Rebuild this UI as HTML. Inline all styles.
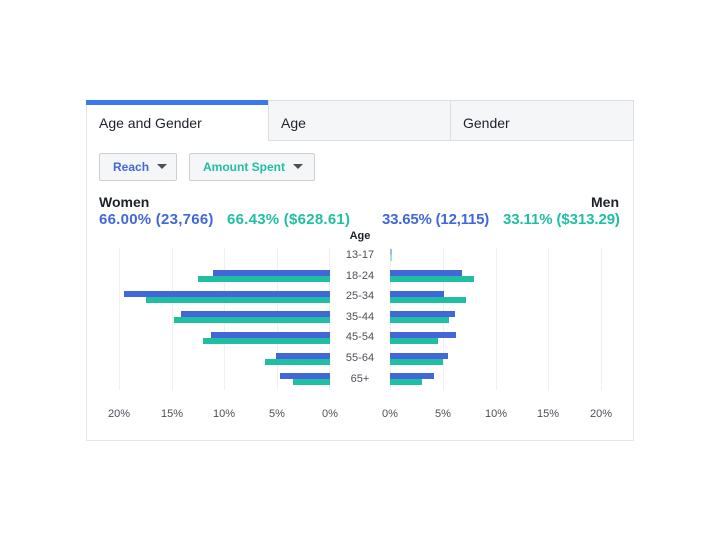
<html><head><style>
body{margin:0;width:720px;height:540px;background:#fff;font-family:"Liberation Sans",Arial,sans-serif;position:relative;overflow:hidden}
div{position:absolute;box-sizing:border-box}
.b{background:#4267d8;height:6px}
.t{background:#20bfa3;height:6px}
.g{width:1px;background:#eef0f2;top:248px;height:142px}
.lab{font-size:11px;color:#4b4f56;width:60px;text-align:center;left:330px}
.ax{font-size:11px;color:#4b4f56;top:408px;width:40px;text-align:center}
.num{top:211px;font-size:15px;font-weight:bold;letter-spacing:0.25px}
.tri{display:inline-block;width:0;height:0;border-left:5px solid transparent;border-right:5px solid transparent;border-top:5px solid #4b4f56;vertical-align:middle;margin-left:8px;position:relative;top:-1px}
</style></head><body>
<div style="left:86px;top:100px;width:548px;height:341px;border:1px solid #e5e7ea"></div>
<div style="left:268px;top:100px;width:366px;height:41px;background:#f5f6f7;border:1px solid #dddfe2"></div>
<div style="left:450px;top:100px;width:1px;height:41px;background:#dddfe2"></div>
<div style="left:86px;top:100px;width:182px;height:5px;background:#3b78f0"></div>
<div style="left:99px;top:115px;font-size:14px;color:#1d2129">Age and Gender</div>
<div style="left:281px;top:115px;font-size:14px;color:#1d2129">Age</div>
<div style="left:463px;top:115px;font-size:14px;color:#1d2129">Gender</div>
<div style="left:99px;top:153px;width:78px;height:28px;background:#f5f6f7;border:1px solid #ccd0d5;border-radius:2px;font-size:12px;font-weight:bold;color:#4267d8;padding:6px 0 0 13px">Reach<span class="tri"></span></div>
<div style="left:189px;top:153px;width:126px;height:28px;background:#f5f6f7;border:1px solid #ccd0d5;border-radius:2px;font-size:12px;font-weight:bold;color:#20bfa3;padding:6px 0 0 13px">Amount Spent<span class="tri"></span></div>
<div style="left:99px;top:194px;font-size:14px;font-weight:bold;color:#1d2129">Women</div>
<div style="left:591px;top:194px;font-size:14px;font-weight:bold;color:#1d2129">Men</div>
<div class="num" style="left:99px;color:#4267d8">66.00% (23,766)</div>
<div class="num" style="left:227px;color:#20bfa3">66.43% ($628.61)</div>
<div class="num" style="left:382px;color:#4267d8;letter-spacing:-0.2px">33.65% (12,115)</div>
<div class="num" style="left:503px;color:#20bfa3;letter-spacing:-0.1px">33.11% ($313.29)</div>
<div style="left:330px;top:230px;width:60px;text-align:center;font-size:11px;font-weight:bold;color:#1d2129">Age</div>
<div class="g" style="left:119px"></div><div class="g" style="left:172px"></div><div class="g" style="left:224px"></div><div class="g" style="left:277px"></div><div class="g" style="left:329px"></div>
<div class="g" style="left:390px"></div><div class="g" style="left:443px"></div><div class="g" style="left:496px"></div><div class="g" style="left:548px"></div><div class="g" style="left:601px"></div>
<div class="lab" style="top:249px">13-17</div>
<div class="lab" style="top:270px">18-24</div>
<div class="lab" style="top:290px">25-34</div>
<div class="lab" style="top:311px">35-44</div>
<div class="lab" style="top:331px">45-54</div>
<div class="lab" style="top:352px">55-64</div>
<div class="lab" style="top:373px">65+</div>
<div class="b" style="top:249px;left:390px;width:2px;background:#a8b8ee"></div><div class="t" style="top:255px;left:390px;width:2px;background:#9fe3d5"></div>
<div class="b" style="top:270px;left:213px;width:117px"></div><div class="t" style="top:276px;left:198px;width:132px"></div>
<div class="b" style="top:270px;left:390px;width:72px"></div><div class="t" style="top:276px;left:390px;width:84px"></div>
<div class="b" style="top:291px;left:124px;width:206px"></div><div class="t" style="top:297px;left:146px;width:184px"></div>
<div class="b" style="top:291px;left:390px;width:54px"></div><div class="t" style="top:297px;left:390px;width:76px"></div>
<div class="b" style="top:311px;left:181px;width:149px"></div><div class="t" style="top:317px;left:174px;width:156px"></div>
<div class="b" style="top:311px;left:390px;width:65px"></div><div class="t" style="top:317px;left:390px;width:59px"></div>
<div class="b" style="top:332px;left:211px;width:119px"></div><div class="t" style="top:338px;left:203px;width:127px"></div>
<div class="b" style="top:332px;left:390px;width:66px"></div><div class="t" style="top:338px;left:390px;width:48px"></div>
<div class="b" style="top:353px;left:276px;width:54px"></div><div class="t" style="top:359px;left:265px;width:65px"></div>
<div class="b" style="top:353px;left:390px;width:58px"></div><div class="t" style="top:359px;left:390px;width:53px"></div>
<div class="b" style="top:373px;left:280px;width:50px"></div><div class="t" style="top:379px;left:293px;width:37px"></div>
<div class="b" style="top:373px;left:390px;width:44px"></div><div class="t" style="top:379px;left:390px;width:32px"></div>
<div class="ax" style="left:99px">20%</div><div class="ax" style="left:152px">15%</div><div class="ax" style="left:204px">10%</div><div class="ax" style="left:257px">5%</div><div class="ax" style="left:310px">0%</div>
<div class="ax" style="left:370px">0%</div><div class="ax" style="left:423px">5%</div><div class="ax" style="left:476px">10%</div><div class="ax" style="left:528px">15%</div><div class="ax" style="left:581px">20%</div>
</body></html>
